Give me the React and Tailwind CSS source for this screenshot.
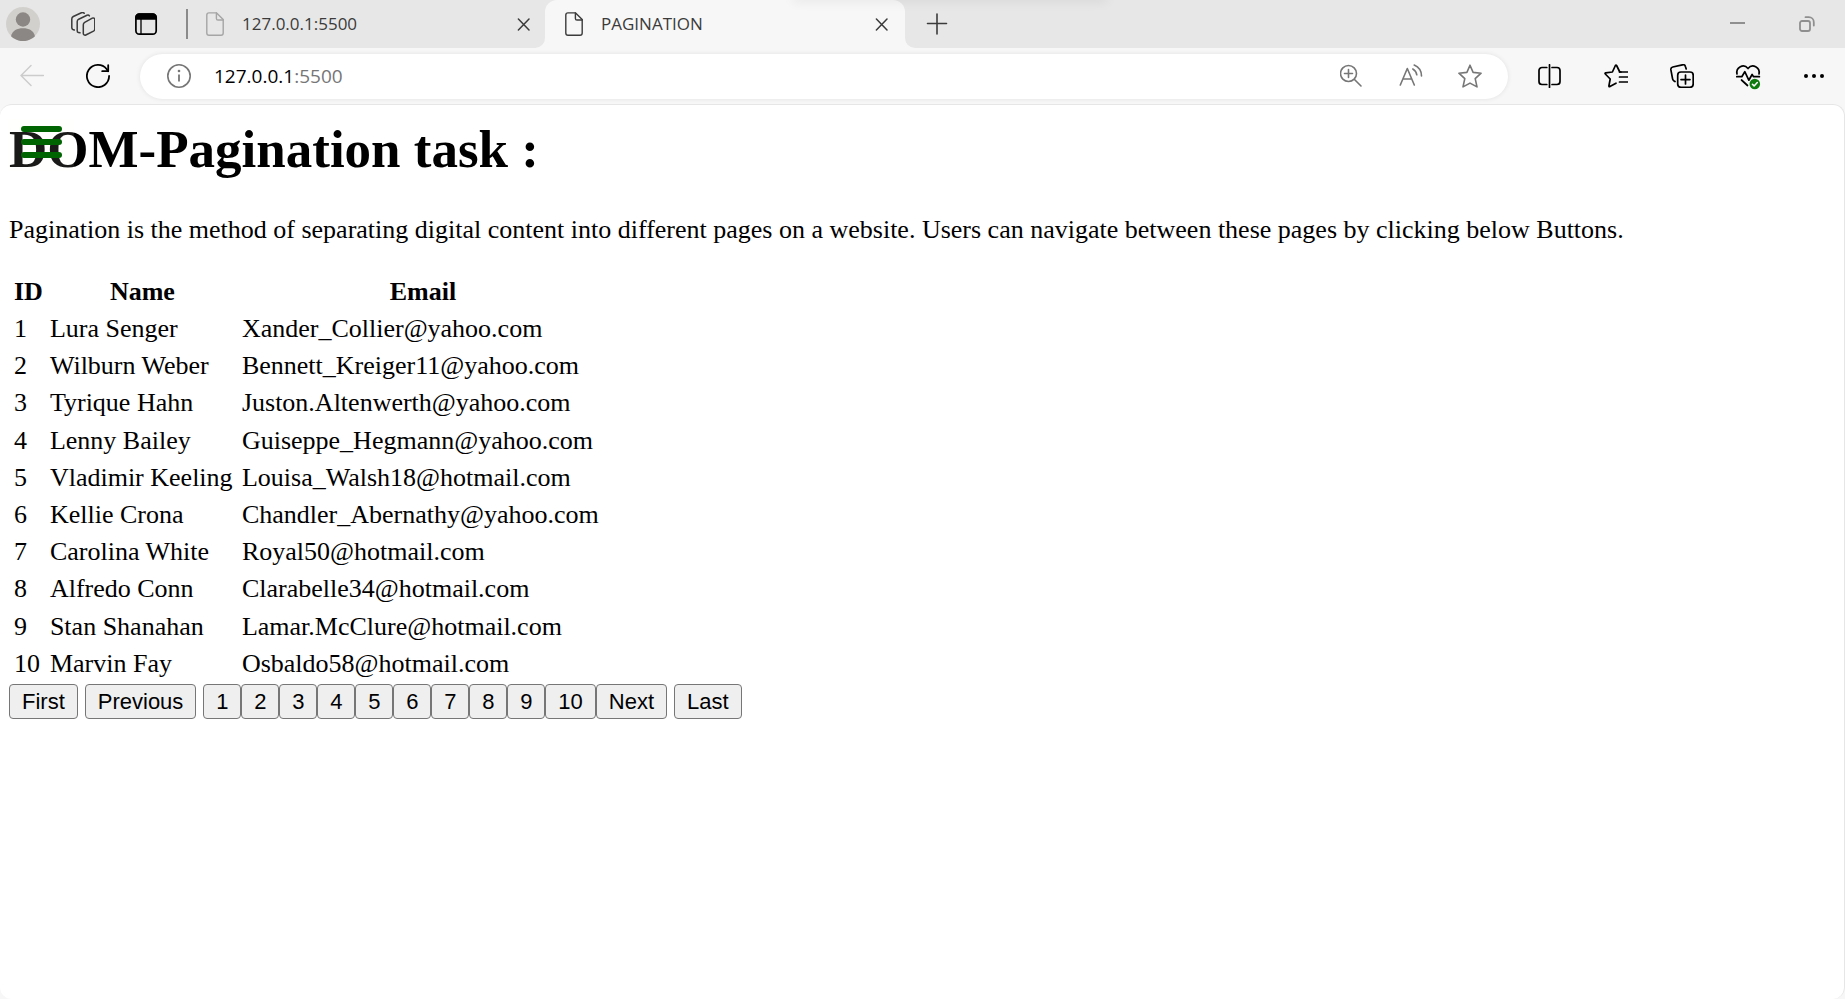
import React from "react";

const people = [
  ["1", "Lura Senger", "Xander_Collier@yahoo.com"],
  ["2", "Wilburn Weber", "Bennett_Kreiger11@yahoo.com"],
  ["3", "Tyrique Hahn", "Juston.Altenwerth@yahoo.com"],
  ["4", "Lenny Bailey", "Guiseppe_Hegmann@yahoo.com"],
  ["5", "Vladimir Keeling", "Louisa_Walsh18@hotmail.com"],
  ["6", "Kellie Crona", "Chandler_Abernathy@yahoo.com"],
  ["7", "Carolina White", "Royal50@hotmail.com"],
  ["8", "Alfredo Conn", "Clarabelle34@hotmail.com"],
  ["9", "Stan Shanahan", "Lamar.McClure@hotmail.com"],
  ["10", "Marvin Fay", "Osbaldo58@hotmail.com"],
];

const pages = ["1", "2", "3", "4", "5", "6", "7", "8", "9", "10"];

function Icon({ children, className = "size-6", stroke = 1.6, box = "0 0 24 24" }) {
  return (
    <svg
      viewBox={box}
      className={className}
      fill="none"
      stroke="currentColor"
      strokeWidth={stroke}
      strokeLinecap="round"
      strokeLinejoin="round"
      aria-hidden="true"
    >
      {children}
    </svg>
  );
}

function IconButton({ label, className = "", children }) {
  return (
    <button type="button" aria-label={label} className={`block shrink-0 ${className}`}>
      {children}
    </button>
  );
}

function DocIcon() {
  return (
    <Icon className="h-6 w-[18px] shrink-0" box="0 0 18 24" stroke={1.4}>
      <path d="M3 .9h7.6L17.2 7.6V21a2.2 2.2 0 0 1-2.2 2.2H3A2.2 2.2 0 0 1 .8 21V3A2.2 2.2 0 0 1 3 .9Z" />
      <path d="M10.4 1v5.4a1.6 1.6 0 0 0 1.6 1.6h5.2" />
    </Icon>
  );
}

function CloseIcon() {
  return (
    <Icon className="size-[14px]" box="0 0 14 14" stroke={1.5}>
      <path d="M1.400 2l10.600 11M12 2L1.400 13" />
    </Icon>
  );
}

function TabStrip() {
  return (
    <header className="relative flex h-12 items-center overflow-hidden bg-[#e7e7e7] pl-[6px] pr-[30px] text-[#3b3b3b]">
      <IconButton label="Profile">
        <svg viewBox="0 0 34 34" className="size-[34px]" aria-hidden="true">
          <circle cx="17" cy="17" r="17" fill="#d2d0cc" />
          <circle cx="17" cy="12.5" r="7.2" fill="#8b8784" />
          <path d="M5 29.200C6.500 23.500 11 21.200 17 21.200S27.500 23.500 29 29.200A17 17 0 0 1 5 29.200Z" fill="#8b8784" />
        </svg>
      </IconButton>
      <IconButton label="Workspaces" className="ml-[31px]">
        <Icon stroke={1.5}>
          <path d="M13.700 10.300l7.600-4.200a1.700 1.700 0 0 1 2.500 1.500v9.300a2.500 2.500 0 0 1-1.300 2.200l-7.700 3.900a1.700 1.700 0 0 1-2.500-1.500v-8.700a2.900 2.900 0 0 1 1.400-2.500Z" />
          <path d="M9 20.800l-1.500-.2a1.900 1.900 0 0 1-1.300-1.900V9.600a2.800 2.800 0 0 1 1.500-2.400L16 3.300q1.600-.6 2.400.6" />
          <path d="M3.300 18l-1.400-.5A1.800 1.800 0 0 1 .8 15.800V7A2.800 2.800 0 0 1 2.300 4.500L10.400.8q1.900-.6 2.800.5" />
        </Icon>
      </IconButton>
      <IconButton label="Tab actions menu" className="ml-[39px] text-black">
        <Icon stroke={1.7}>
          <rect x="1.900" y="2.200" width="20.300" height="20" rx="3.400" />
          <path d="M2 6.800V5.500A3.300 3.300 0 0 1 5.300 2.200h13.400A3.300 3.300 0 0 1 22 5.500v1.300Z" fill="currentColor" />
          <path d="M7 7v15" strokeWidth="1.300" />
        </Icon>
      </IconButton>
      <div className="ml-7 h-[30px] w-[2px] bg-[#8b8b8b]" />
      <div className="ml-[18px] flex w-[339px] items-center font-['Open_Sans',sans-serif] text-[17px]">
        <span className="text-[#a5a5a5]"><DocIcon /></span>
        <span className="ml-[18px] flex-1">127.0.0.1:5500</span>
        <IconButton label="Close tab 127.0.0.1:5500" className="mr-[14px]"><CloseIcon /></IconButton>
      </div>
      <div className="relative flex h-12 w-[360px] items-center rounded-t-xl bg-[#f7f7f7] pl-5 pr-4 font-['Open_Sans',sans-serif] text-[17px]">
        <svg viewBox="0 0 10 10" className="absolute bottom-0 right-full size-[10px]" aria-hidden="true">
          <path d="M10 0v10H0A10 10 0 0 0 10 0Z" fill="#f7f7f7" />
        </svg>
        <DocIcon />
        <span className="ml-[18px] flex-1">PAGINATION</span>
        <IconButton label="Close tab PAGINATION"><CloseIcon /></IconButton>
        <svg viewBox="0 0 10 10" className="absolute bottom-0 left-full size-[10px]" aria-hidden="true">
          <path d="M0 0v10h10A10 10 0 0 1 0 0Z" fill="#f7f7f7" />
        </svg>
      </div>
      <IconButton label="New tab" className="ml-[21px]">
        <Icon className="size-[22px]" box="0 0 22 22" stroke={1.6}>
          <path d="M11 1v20M1.500 10.500h19" />
        </Icon>
      </IconButton>
      <div className="ml-auto flex items-center text-[#8f8f8f]">
        <IconButton label="Minimize">
          <Icon className="size-4" box="0 0 16 16" stroke={2}>
            <path d="M0 7h15" strokeLinecap="butt" />
          </Icon>
        </IconButton>
        <IconButton label="Restore" className="ml-[53px]">
          <Icon className="size-4" box="0 0 16 16" stroke={1.8}>
            <rect x="1" y="5" width="10" height="10" rx="2" />
            <path d="M6.500 1.200h3.300a5 5 0 0 1 5 5v3.300" />
          </Icon>
        </IconButton>
      </div>
      <div className="pointer-events-none absolute -top-1 left-[43%] h-1 w-[17%] shadow-[0_0_12px_rgba(0,0,0,0.14)]" />
    </header>
  );
}

function Toolbar() {
  return (
    <div className="flex h-14 items-center bg-[#f7f7f7] pl-5 pr-[19px] text-black">
      <IconButton label="Back" className="text-[#cccccc]">
        <Icon stroke={1.500}>
          <path d="M23.500 11.500H1M11 1.500L1 11.500l10 10" />
        </Icon>
      </IconButton>
      <IconButton label="Refresh" className="ml-[42px]">
        <Icon stroke={1.800}>
          <path d="M23.100 12A11.100 11.100 0 1 1 20.600 5L22 7.200" />
          <path d="M22.200 1.200v6h-6" />
        </Icon>
      </IconButton>
      <div className="ml-[30px] flex h-[45px] min-w-0 flex-1 items-center rounded-full bg-white pl-[27px] pr-[26px] text-[#767676] shadow-[0_0_5px_rgba(0,0,0,0.09)]">
        <IconButton label="View site information">
          <Icon stroke={1.600}>
            <circle cx="12" cy="12" r="11.200" />
            <path d="M12 10.500v7" strokeLinecap="butt" strokeWidth="1.800" />
            <circle cx="12" cy="7" r="1.300" fill="currentColor" stroke="none" />
          </Icon>
        </IconButton>
        <a href="#top" className="ml-[23px] flex-1 font-['Open_Sans',sans-serif] text-[19px]">
          <span className="text-black">127.0.0.1</span>:5500
        </a>
        <div className="flex items-center gap-[35px]">
          <IconButton label="Zoom">
            <Icon stroke={1.600}>
              <circle cx="8.500" cy="9.500" r="8" />
              <path d="M14.500 15.500l6.500 6.500M8.500 5.500v8M4.500 9.500h8" />
            </Icon>
          </IconButton>
          <IconButton label="Read aloud">
            <Icon stroke={1.600}>
              <path d="M1.300 21L8.300 4.500 15.300 21M3.800 15h9" />
              <path d="M13.800 5a8 8 0 0 1 4 5.800M15.200 1a12 12 0 0 1 7.300 11" />
            </Icon>
          </IconButton>
          <IconButton label="Add to favorites">
            <Icon stroke={1.600}>
              <path d="M12 1.200l3.100 7.200 8 .8-5.900 5.500 1.800 8.200-7-3.800-7 3.800 1.800-8.200L.9 9.200l8-.8Z" />
            </Icon>
          </IconButton>
        </div>
      </div>
      <div className="ml-[30px] flex items-center gap-[42px]">
        <IconButton label="Split screen">
          <Icon stroke={1.700}>
            <path d="M8.800 3.500H4A3 3 0 0 0 1 6.500v11a3 3 0 0 0 3 3h4.800M14 3.500h5a3 3 0 0 1 3 3v11a3 3 0 0 1-3 3h-5M11.500 .8v22.600" />
          </Icon>
        </IconButton>
        <IconButton label="Favorites">
          <Icon stroke={1.700}>
            <path d="M17 8h-1.200L12.600 1.500q-.6-.9-1.200 0L8.400 8l-6.800.9q-1 .3-.3 1.100L6.200 15l-1.300 7q0 1 1 .6L12 19.200" />
            <path d="M15.500 8h8M15.500 13h8M15.500 18h8" />
          </Icon>
        </IconButton>
        <IconButton label="Collections">
          <Icon stroke={1.700}>
            <rect x="7.700" y="8" width="15.500" height="15.300" rx="3.200" />
            <path d="M15.500 11v9M11 15.600h9" />
            <path d="M5 17.500l-1.300-.8a3 3 0 0 1-1.100-1.900L.9 5.900A2.600 2.600 0 0 1 2.800 3l9.600-2.200a2.600 2.600 0 0 1 3.100 1.900l.7 2.300" />
          </Icon>
        </IconButton>
        <IconButton label="Browser essentials">
          <Icon stroke={1.700} className="size-6 overflow-visible">
            <path d="M1 10C-.3 3.500 7.500-1 12 4.500 16.500-1 24.300 3.500 23 10" />
            <path d="M.8 12.700h5l3-5 4 8.500 3.300-5.700 1.500 2.200h5.800M5.500 16l6 5.500" />
            <circle cx="18.800" cy="20" r="5.300" fill="#0f7b0f" stroke="none" />
            <path d="M16.400 20.200l1.700 1.700 3.200-3.400" stroke="white" strokeWidth="1.500" />
          </Icon>
        </IconButton>
        <IconButton label="Settings and more">
          <Icon stroke={0}>
            <g fill="currentColor">
              <circle cx="4" cy="12" r="2" />
              <circle cx="12" cy="12" r="2" />
              <circle cx="20" cy="12" r="2" />
            </g>
          </Icon>
        </IconButton>
      </div>
    </div>
  );
}

function PageButton({ children, className = "px-3" }) {
  return (
    <button
      type="button"
      className={`h-[35px] rounded-[4px] border border-[#767676] bg-[#efefef] font-['Liberation_Sans',sans-serif] text-[22px] leading-[30px] text-black ${className}`}
    >
      {children}
    </button>
  );
}

export default function App() {
  return (
    <div id="top" className="flex min-h-screen flex-col bg-[#f7f7f7]">
      <TabStrip />
      <Toolbar />
      <main className="relative flex-1 rounded-xl border-r border-t border-[#e6e6e6] bg-white px-[9px] font-['Liberation_Serif',serif] text-[26px] leading-[30px] text-black">
        <h1 className="pt-[14px] text-[53px] font-bold leading-[60px]">DOM-Pagination task :</h1>
        <button
          type="button"
          aria-label="Open menu"
          className="absolute left-[9px] top-[14px] flex h-[52px] w-[65px] flex-col gap-[7px] bg-[#fffff0]/10 px-3 pt-[7px]"
        >
          <span className="h-[6px] w-full rounded-full bg-[#006400]" />
          <span className="h-[6px] w-full rounded-full bg-[#006400]" />
          <span className="h-[6px] w-full rounded-full bg-[#006400]" />
        </button>
        <p className="pt-9">
          Pagination is the method of separating digital content into different pages on a website. Users can navigate between these pages by clicking below Buttons.
        </p>
        <table className="mt-[27px] h-[412px] border-separate border-spacing-[3px]">
          <thead>
            <tr className="h-[34px]">
              <th className="px-[2px] py-0">ID</th>
              <th className="w-[189px] px-[2px] py-0">Name</th>
              <th className="w-[366px] px-[2px] py-0">Email</th>
            </tr>
          </thead>
          <tbody>
            {people.map(([id, name, email]) => (
              <tr key={id}>
                <td className="px-[2px] py-0">{id}</td>
                <td className="px-[2px] py-0">{name}</td>
                <td className="px-[2px] py-0">{email}</td>
              </tr>
            ))}
          </tbody>
        </table>
        <nav aria-label="Pagination" className="flex gap-[7px]">
          <PageButton>First</PageButton>
          <PageButton>Previous</PageButton>
          <div className="flex">
            {pages.map((page) => (
              <PageButton key={page} className={page.length > 1 ? "px-3" : "w-[38px]"}>{page}</PageButton>
            ))}
            <PageButton>Next</PageButton>
          </div>
          <PageButton>Last</PageButton>
        </nav>
      </main>
    </div>
  );
}
